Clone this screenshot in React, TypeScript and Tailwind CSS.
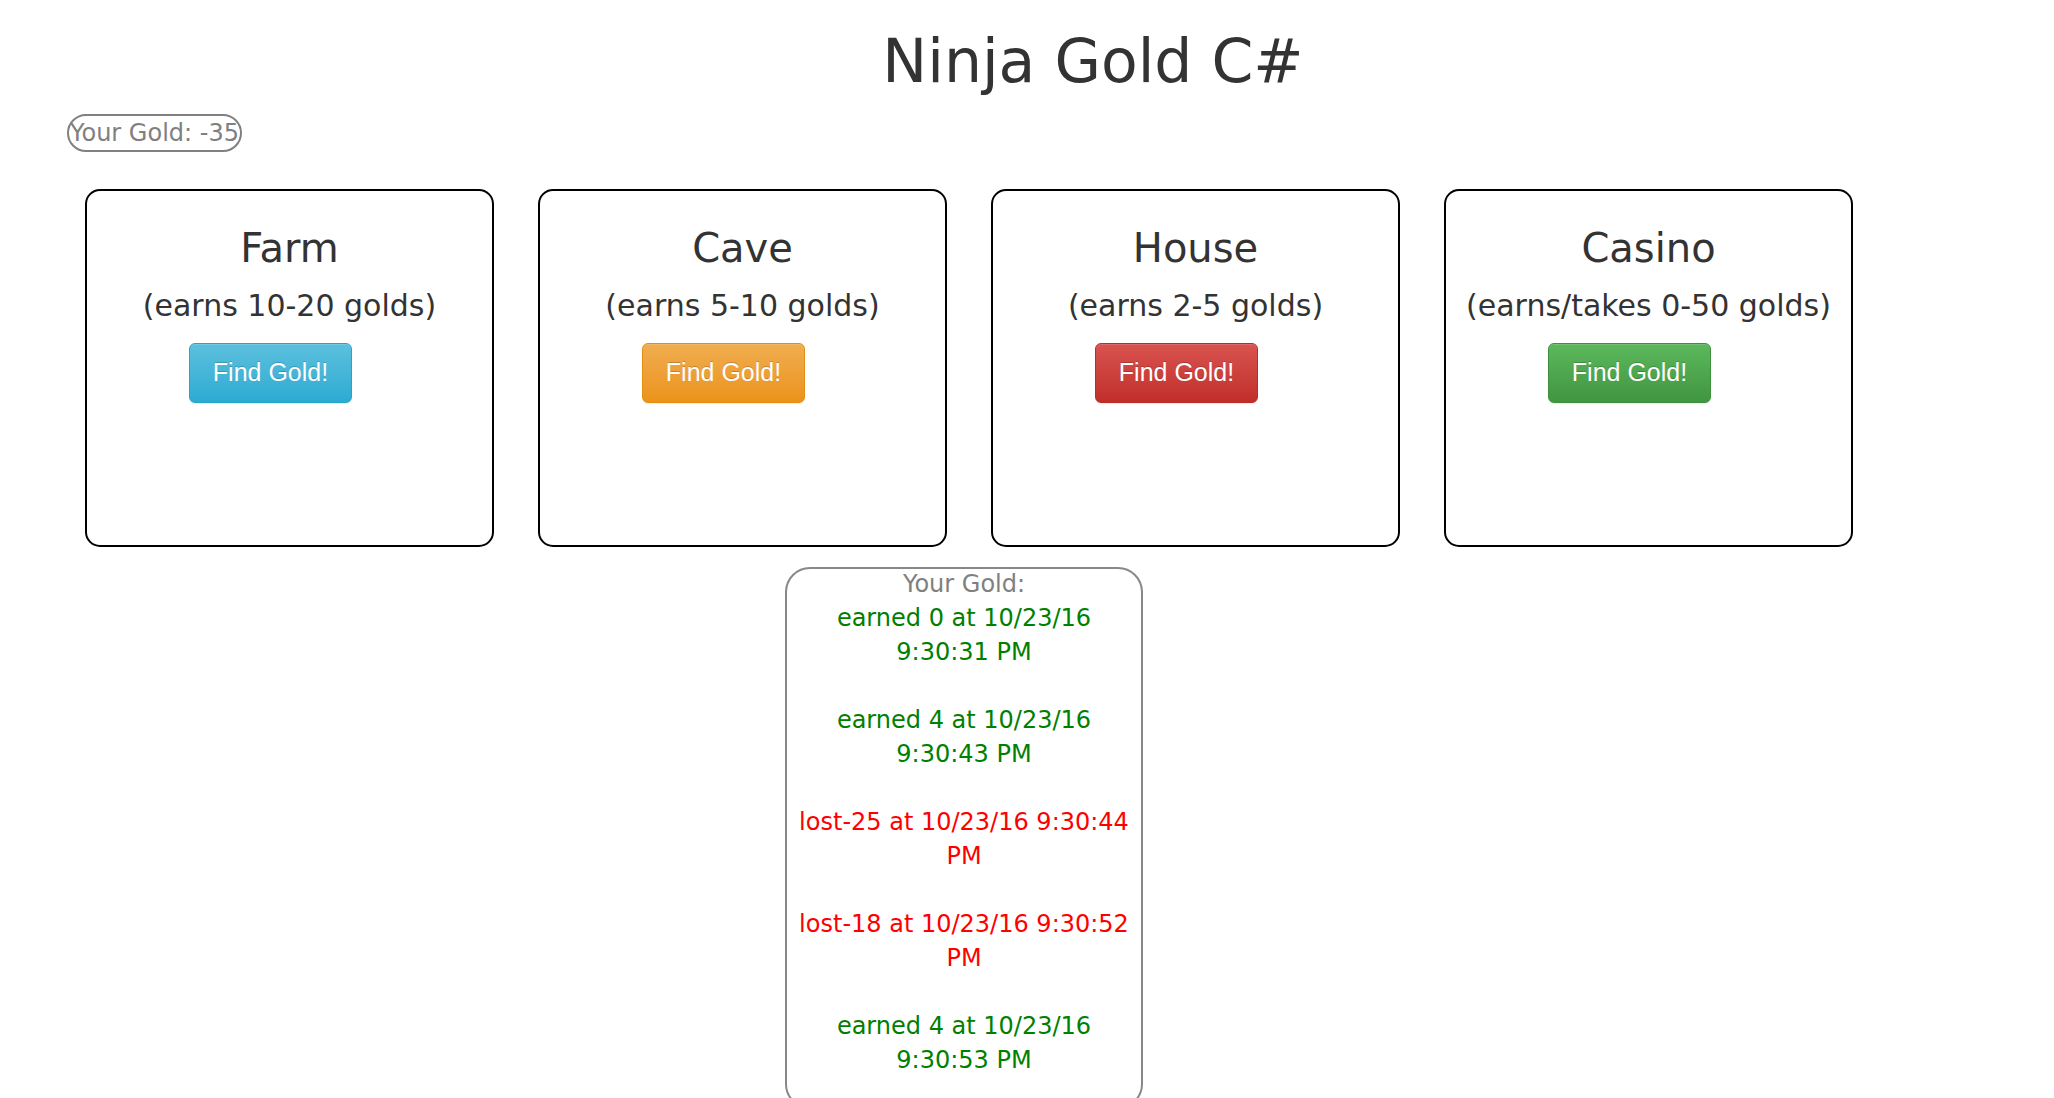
const cards = [
  { name: 'Farm', desc: '(earns 10-20 golds)', btn: 'bg-gradient-to-b from-[#5bc0de] to-[#2aabd2] border-[#28a4c9]' },
  { name: 'Cave', desc: '(earns 5-10 golds)', btn: 'bg-gradient-to-b from-[#f0ad4e] to-[#eb9316] border-[#e38d13]' },
  { name: 'House', desc: '(earns 2-5 golds)', btn: 'bg-gradient-to-b from-[#d9534f] to-[#c12e2a] border-[#b92c28]' },
  { name: 'Casino', desc: '(earns/takes 0-50 golds)', btn: 'bg-gradient-to-b from-[#5cb85c] to-[#419641] border-[#3e8f3e]' },
];

const log = [
  { text: 'earned 0 at 10/23/16 9:30:31 PM', lost: false },
  { text: 'earned 4 at 10/23/16 9:30:43 PM', lost: false },
  { text: 'lost-25 at 10/23/16 9:30:44 PM', lost: true },
  { text: 'lost-18 at 10/23/16 9:30:52 PM', lost: true },
  { text: 'earned 4 at 10/23/16 9:30:53 PM', lost: false },
];

function Card({ name, desc, btn }: { name: string; desc: string; btn: string }) {
  return (
    <div className="w-[409px] h-[358px] border-2 border-black rounded-[15px] flex flex-col items-center pt-[33px]">
      <h2 className="text-[40px] leading-[48px] text-[#333]">{name}</h2>
      <p className="text-[30px] leading-[40px] mt-[14px] text-[#333] whitespace-nowrap">{desc}</p>
      <div className="w-full pl-[102px] mt-[17px]">
        <button
          className={`w-[163px] h-[60px] border rounded-[6px] text-white text-[25px] font-['Liberation_Sans',Arial,sans-serif] shadow-[inset_0_1px_0_rgba(255,255,255,0.15),0_1px_1px_rgba(0,0,0,0.075)] [text-shadow:0_-1px_0_rgba(0,0,0,0.2)] ${btn}`}
        >
          Find Gold!
        </button>
      </div>
    </div>
  );
}

export default function App() {
  return (
    <div className="bg-white font-['DejaVu_Sans',sans-serif] overflow-hidden h-[1098px]">
      <div className="flex justify-center pl-[132px] pt-[23px]">
        <h1 className="text-[60px] leading-[76px] text-[#333]">Ninja Gold C#</h1>
      </div>
      <div className="pl-[67px] mt-[15px]">
        <div className="inline-flex h-[38px] border-2 border-[#808080] rounded-full items-center px-[1px]">
          <span className="text-[24px] leading-[30px] text-[#808080] whitespace-nowrap">Your Gold: -35</span>
        </div>
      </div>
      <div className="flex gap-[44px] pl-[85px] mt-[37px]">
        {cards.map((c) => (
          <Card key={c.name} {...c} />
        ))}
      </div>
      <div className="ml-[785px] mt-[20px] w-[358px] border-2 border-[#888] rounded-[25px] px-[4px] pb-[30px] text-center">
        <div className="text-[24px] leading-[31px] text-[#808080]">Your Gold:</div>
        <div className="flex flex-col gap-[34px] mt-[1px]">
          {log.map((l, i) => (
            <p key={i} className={`text-[24px] leading-[34px] ${l.lost ? 'text-[#ff0000]' : 'text-[#008000]'}`}>
              {l.text}
            </p>
          ))}
        </div>
      </div>
    </div>
  );
}
